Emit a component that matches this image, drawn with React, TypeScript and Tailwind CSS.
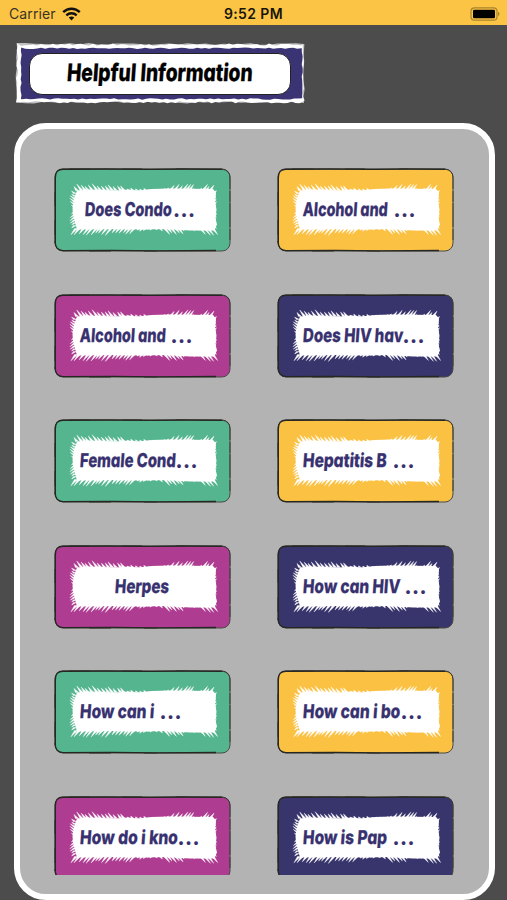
import { useLayoutEffect, useRef, useState } from 'react';

interface Topic {
  title: string;
  color: string;
  inset: number;
  width: number;
  dotGap?: number;
}

const GREEN = '#54b58f';
const YELLOW = '#fac142';
const PURPLE = '#ae3d92';
const NAVY = '#38346c';

const topics: Topic[] = [
  { title: 'Does Condo', color: GREEN, inset: 31, width: 87, dotGap: 1 },
  { title: 'Alcohol and', color: YELLOW, inset: 25.5, width: 85, dotGap: 6 },
  { title: 'Alcohol and', color: PURPLE, inset: 25.5, width: 86, dotGap: 5 },
  { title: 'Does HIV hav', color: NAVY, inset: 25.5, width: 100, dotGap: 0 },
  { title: 'Female Cond', color: GREEN, inset: 25.5, width: 96, dotGap: 0 },
  { title: 'Hepatitis B', color: YELLOW, inset: 25.5, width: 84, dotGap: 6 },
  { title: 'Herpes', color: PURPLE, inset: 61, width: 54 },
  { title: 'How can HIV', color: NAVY, inset: 25.5, width: 97, dotGap: 5 },
  { title: 'How can i', color: GREEN, inset: 25.5, width: 74, dotGap: 6 },
  { title: 'How can i bo', color: YELLOW, inset: 25.5, width: 97, dotGap: 1 },
  { title: 'How do i kno', color: PURPLE, inset: 25.5, width: 98, dotGap: 0 },
  { title: 'How is Pap', color: NAVY, inset: 25.5, width: 84, dotGap: 6 },
];

// small seeded generator so the rough edges stay the same on each render
const seeded = (seed: number) => () => {
  seed = (seed * 16807) % 2147483647;
  return seed / 2147483647;
};

const roughRect = (x: number, y: number, w: number, h: number, amount: number, seed: number, step = 3) => {
  const rand = seeded(seed);
  const jitter = () => (rand() - 0.5) * amount;
  const points: string[] = [];
  for (let i = 0; i < w; i += step) points.push(`${x + i},${y + jitter()}`);
  for (let i = 0; i < h; i += step) points.push(`${x + w + jitter()},${y + i}`);
  for (let i = w; i > 0; i -= step) points.push(`${x + i},${y + h + jitter()}`);
  for (let i = h; i > 0; i -= step) points.push(`${x + jitter()},${y + i}`);
  return points.join(' ');
};

// tapered bristle, wide at the base and pointed at the tip
const bristle = (x: number, y: number, dx: number, dy: number) =>
  Math.abs(dy) > Math.abs(dx) * 0.6
    ? `M${x - 1.6} ${y}L${x + dx} ${y + dy}L${x + 1.6} ${y}Z`
    : `M${x} ${y - 1.6}L${x + dx} ${y + dy}L${x} ${y + 1.6}Z`;

const brushShape = () => {
  const rand = seeded(4211);
  let d = '';
  for (let x = 9; x < 146; x += 2.9 + rand() * 1.9) {
    const long = x < 58 || (x > 102 && x < 122) || x > 134;
    const reach = long ? 4 + rand() * 3 : 1 + rand() * 2;
    d += bristle(x, 6, (x < 80 ? -1 : 1) * reach * 0.75, -reach);
  }
  for (let x = 8; x < 146; x += 2.9 + rand() * 1.9) {
    const long = x < 66 || (x > 96 && x < 112) || x > 132;
    const reach = long ? 4 + rand() * 3 : 1 + rand() * 2;
    d += bristle(x, 44, (x < 84 ? -1 : 1) * reach * 0.8, reach);
  }
  for (let y = 8; y < 24; y += 2.8) {
    const reach = 3 + rand() * 2.5;
    d += bristle(7, y + 1, -reach, -reach * 0.7);
    d += bristle(7, 49 - y, -reach, reach * 0.7);
    d += bristle(146, y, 1 + rand() * 2, -2);
    d += bristle(146, 50 - y, 1 + rand() * 2, 2);
  }
  return d;
};

const frameOuter = roughRect(2, 2.6, 286.5, 57.6, 2.2, 91, 4);
const frameOverlay = roughRect(1.6, 2, 287.5, 58.6, 1.8, 555, 9);
const frameInner = roughRect(6.2, 6.3, 281, 50.6, 1.5, 37, 4);
const brush = brushShape();

function FitText({ text, width, className }: { text: string; width: number; className: string }) {
  const ref = useRef<HTMLSpanElement>(null);
  const [scale, setScale] = useState(1);

  useLayoutEffect(() => {
    if (ref.current) setScale(width / ref.current.offsetWidth);
  }, [width, text]);

  return (
    <span className="block shrink-0" style={{ width }}>
      <span
        ref={ref}
        className={`inline-block origin-left whitespace-nowrap font-['Inter',sans-serif] [font-feature-settings:'cv11'] ${className}`}
        style={{ transform: `scaleX(${scale}) skewX(-5deg)` }}
      >
        {text}
      </span>
    </span>
  );
}

function StatusBar() {
  return (
    <header className="grid h-[25px] grid-cols-3 items-center bg-[#fcc445] pt-0.5 pr-[7px] pl-[9px] font-['Inter',sans-serif] text-[#17140c]">
      <div className="flex items-center gap-1.5">
        <span className="text-[14px] tracking-[0.1px] text-[#393326]">Carrier</span>
        <svg width="19" height="14" viewBox="0 0 19 14" fill="none" stroke="#111" strokeWidth="2.4">
          <path d="M1.2 5.2C5.9.6 13.1.6 17.8 5.2" />
          <path d="M4.3 8.3C7.2 5.5 11.8 5.5 14.7 8.3" />
          <path d="M6.7 10.6C8.2 9.1 10.8 9.1 12.3 10.6L9.5 13.4Z" fill="#111" stroke="none" />
        </svg>
      </div>
      <span className="pr-0.5 text-center text-[14px] font-semibold whitespace-nowrap tracking-[0.4px]">9:52 PM</span>
      <svg className="justify-self-end" width="30" height="14" viewBox="0 0 30 14">
        <rect x="1" y=".8" width="26" height="12.4" rx="3.5" fill="none" stroke="#a9842e" strokeWidth="1.2" />
        <rect x="3" y="2.7" width="22" height="8.6" rx="1.3" fill="#000" />
        <path d="M28 4.8Q31 7 28 9.2Z" fill="#a9842e" />
      </svg>
    </header>
  );
}

function PageTitle() {
  return (
    <div className="relative mt-[17px] ml-[15px] h-[64px] w-[291px] pt-[11px] pl-[14px]">
      <svg className="absolute inset-0" width="291" height="64">
        <polygon points={frameOuter} fill="#fff" />
        <polygon points={frameOverlay} fill="#fff" fillOpacity=".65" />
        <polygon points={frameInner} fill="#3b3474" />
      </svg>
      <h1 className="relative flex h-[42px] w-[262px] items-center rounded-[13px] border border-[#222] bg-white pb-0.5 pl-[37px]">
        <FitText
          text="Helpful Information"
          width={186}
          className="text-[24px] leading-8 font-extrabold text-black [-webkit-text-stroke:0.3px_#000]"
        />
      </h1>
    </div>
  );
}

function TopicCard({ topic }: { topic: Topic }) {
  return (
    <button className="relative block h-[84px] w-[177px] text-left">
      <svg className="absolute inset-0" width="177" height="84" fill="none">
        <rect x="1" y="1" width="175" height="82" rx="8" fill={topic.color} stroke="#4a4a44" strokeWidth="1" />
        <path d="M1.3 75V10Q1 1.2 9 1.2L52 1L96 1.4L131 1L168 1.2" stroke="#262623" strokeWidth="1.4" />
        <path d="M1.2 73Q1 82.6 9 82.6L58 82.3L104 82.8L162 82.5" stroke="#262623" strokeWidth="1.3" />
        <path d="M168 1.2Q176 2 176 10V72" stroke="#3a3a36" strokeWidth=".9" strokeDasharray="24 2 11 1" />
        <path d="M15 .6H36M68 .6H88M122 .6H131M35 83.3H57M90 83.3H103M.7 24V38M.7 52V67" stroke="#30302c" strokeWidth=".6" />
        <g transform="translate(14 16.5)" fill="#fff">
          <path d="M9 6L20 5L49 6L60 5L70 6L84 4.5L101 4L145 4.5L148 8L147 17L148.5 25L147.5 34L149 40L146 46L122 46L98 44.5L75 45L43 44.5L9 45L7 38L5 30L4.5 24L6 14Z" />
          <path d={brush} stroke="#fff" strokeWidth=".35" />
        </g>
      </svg>
      <span className="relative flex h-[82px] items-center text-[#38316f]" style={{ paddingLeft: topic.inset }}>
        <FitText
          text={topic.title}
          width={topic.width}
          className="text-[19px] leading-7 font-extrabold [-webkit-text-stroke:0.25px_#38316f]"
        />
        {topic.dotGap !== undefined && (
          <span
            className="font-['Inter',sans-serif] text-[20px] leading-7 font-extrabold tracking-[0.5px]"
            style={{ marginLeft: topic.dotGap }}
          >
            ...
          </span>
        )}
      </span>
    </button>
  );
}

export default function App() {
  return (
    <div className="flex h-[900px] w-[507px] flex-col overflow-hidden bg-[#4c4c4c]">
      <StatusBar />
      <PageTitle />
      <main className="mt-[17px] ml-[14px] h-[777px] w-[481px] rounded-[32px] border-[6px] border-white bg-[#b3b3b3] pt-[39px] pl-[34px]">
        <div className="grid h-[707px] grid-cols-[177px_177px] auto-rows-[84px] content-start gap-x-[46px] gap-y-[41.5px] overflow-hidden">
          {topics.map((topic, index) => (
            <TopicCard key={index} topic={topic} />
          ))}
        </div>
      </main>
    </div>
  );
}
